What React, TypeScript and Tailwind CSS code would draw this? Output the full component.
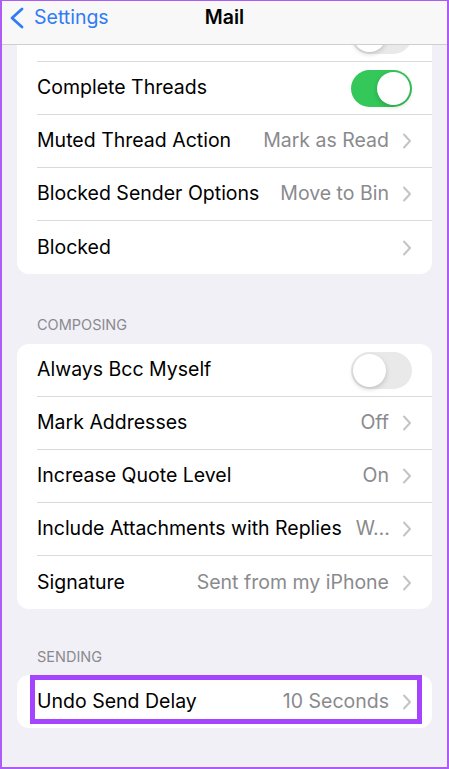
type Row = {
  label: string;
  value?: string;
  toggle?: boolean;
  chevron?: boolean;
};

const threadingRows: Row[] = [
  { label: 'Most Recent Message on Top', toggle: false },
  { label: 'Complete Threads', toggle: true },
  { label: 'Muted Thread Action', value: 'Mark as Read', chevron: true },
  { label: 'Blocked Sender Options', value: 'Move to Bin', chevron: true },
  { label: 'Blocked', chevron: true },
];

const composingRows: Row[] = [
  { label: 'Always Bcc Myself', toggle: false },
  { label: 'Mark Addresses', value: 'Off', chevron: true },
  { label: 'Increase Quote Level', value: 'On', chevron: true },
  { label: 'Include Attachments with Replies', value: 'W...', chevron: true },
  { label: 'Signature', value: 'Sent from my iPhone', chevron: true },
];

const sendingRows: Row[] = [
  { label: 'Undo Send Delay', value: '10 Seconds', chevron: true },
];

function Toggle({ on }: { on: boolean }) {
  return (
    <div
      className={`ml-auto flex h-[37px] w-[61px] shrink-0 items-center rounded-full p-[2px] ${
        on ? 'justify-end bg-[#34c759]' : 'justify-start bg-[#e9e9ea]'
      }`}
    >
      <div className="h-[33px] w-[33px] rounded-full bg-white shadow-[0_2px_5px_rgba(0,0,0,0.18)]" />
    </div>
  );
}

function Chevron() {
  return (
    <svg width="10" height="16" viewBox="0 0 10 16" className="ml-[13px] shrink-0">
      <path
        d="M2 1.5 L8 8 L2 14.5"
        fill="none"
        stroke="#c4c4c8"
        strokeWidth="2"
        strokeLinecap="round"
        strokeLinejoin="round"
      />
    </svg>
  );
}

function Card({ rows }: { rows: Row[] }) {
  return (
    <div className="mx-[15px] rounded-[12px] bg-white pl-5">
      {rows.map((row, i) => (
        <div
          key={row.label}
          className={`flex h-[53px] items-center pr-5 ${
            i < rows.length - 1 ? 'border-b border-[#d9d9dc]' : ''
          }`}
        >
          <span className="shrink-0 whitespace-nowrap text-black">{row.label}</span>
          <span className="ml-[14px] min-w-0 flex-1 truncate text-right text-[#8a8a8e]">
            {row.value}
          </span>
          {row.toggle !== undefined && <Toggle on={row.toggle} />}
          {row.chevron && <Chevron />}
        </div>
      ))}
    </div>
  );
}

function SectionHeader({ title, tight }: { title: string; tight?: boolean }) {
  return (
    <div
      className={`h-[18px] px-[35px] text-[14.5px] leading-[18px] text-[#8a8a8e] ${
        tight ? 'mb-[9px] mt-[39px]' : 'mb-[10px] mt-[42px]'
      }`}
    >
      {title}
    </div>
  );
}

export default function App() {
  return (
    <div
      className="relative h-[769px] w-[449px] overflow-hidden border-2 border-t border-[#ad5cf5] bg-[#f1f0f6] text-[19.5px]"
      style={{ fontFamily: 'Inter, "Liberation Sans", sans-serif' }}
    >
      <div className="pt-[8px]">
        <Card rows={threadingRows} />
        <SectionHeader title="COMPOSING" />
        <Card rows={composingRows} />
        <SectionHeader title="SENDING" tight />
        <div className="relative">
          <Card rows={sendingRows} />
          <div className="absolute bottom-[4px] left-[28px] right-[25px] top-0 border-[5px] border-[#a444ff]" />
        </div>
      </div>

      <div className="absolute left-0 right-0 top-0 h-[44px] border-b border-[#cfcfd2] bg-[#f8f8f8]">
        <div className="grid h-[34px] grid-cols-[1fr_auto_1fr] items-center">
          <div className="flex items-center pl-[7px] text-[#2f7cf6]">
            <svg width="16" height="22" viewBox="0 0 16 22">
              <path
                d="M13 2 L3 11 L13 20"
                fill="none"
                stroke="#2f7cf6"
                strokeWidth="2.8"
                strokeLinecap="round"
                strokeLinejoin="round"
              />
            </svg>
            <span className="ml-[9px]">Settings</span>
          </div>
          <span className="font-semibold text-black">Mail</span>
          <div />
        </div>
      </div>
    </div>
  );
}
